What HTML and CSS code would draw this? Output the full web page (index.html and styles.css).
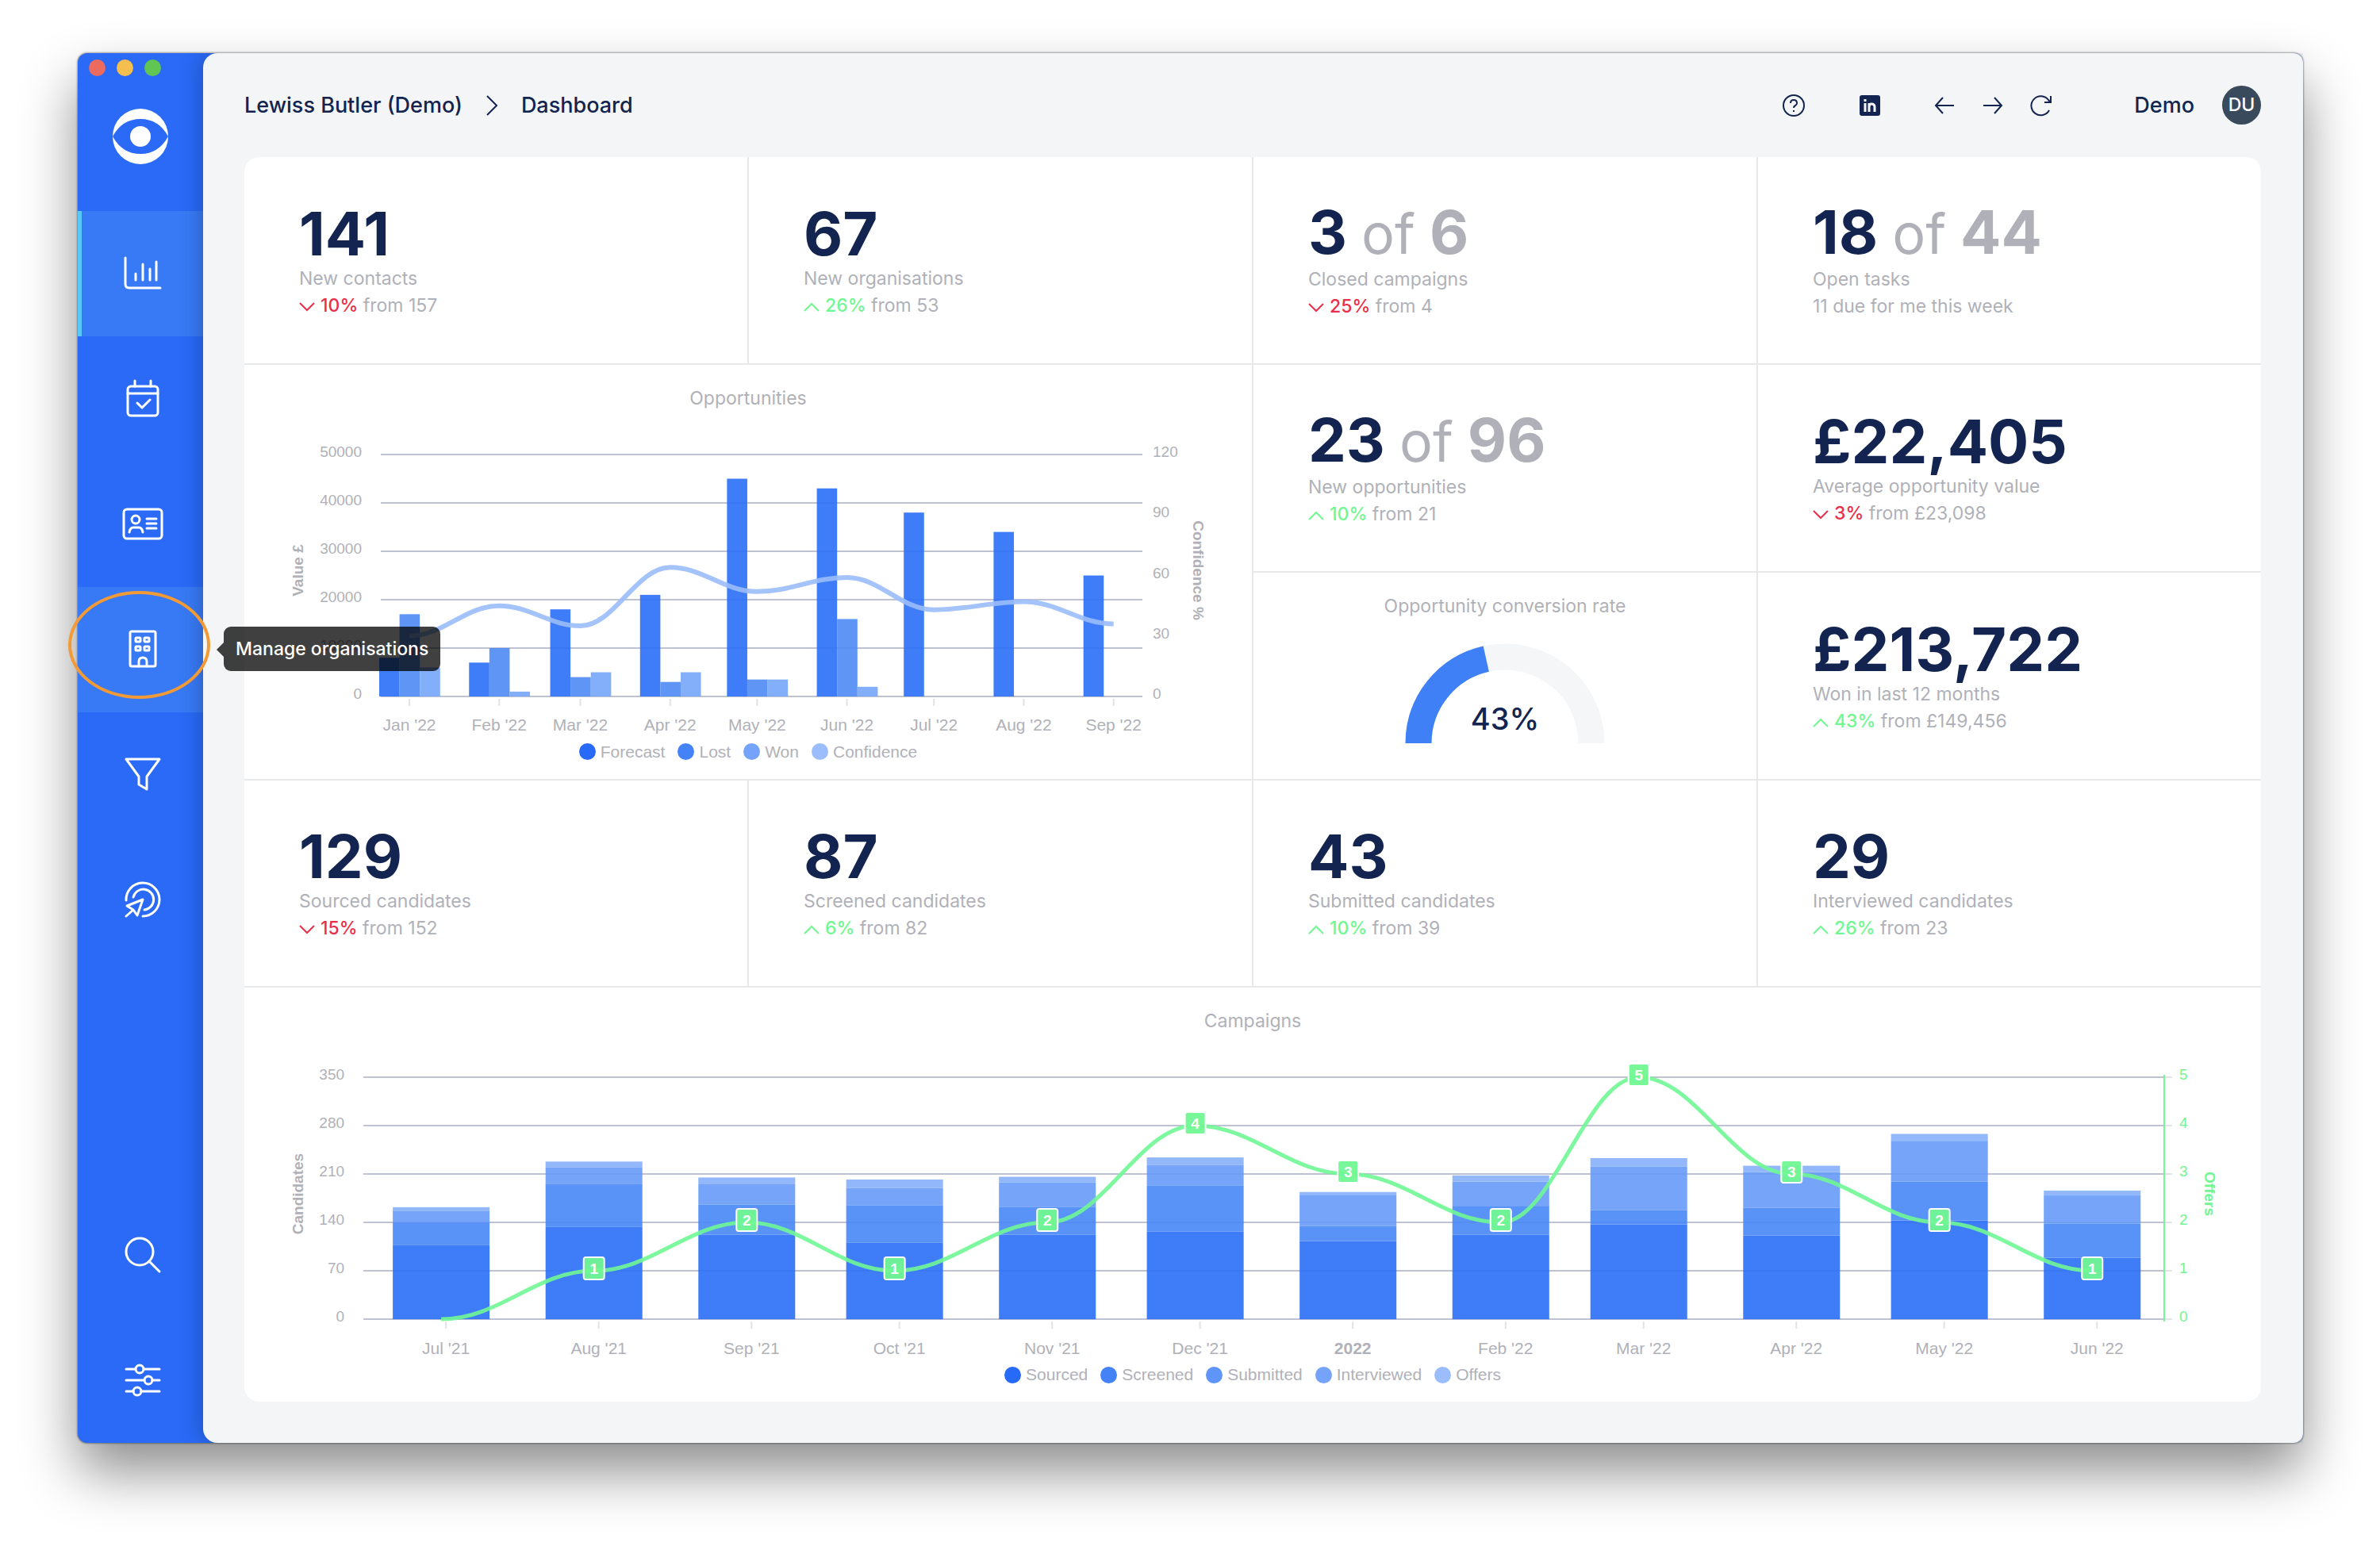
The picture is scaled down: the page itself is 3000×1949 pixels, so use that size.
FILE: index.html
```html
<!DOCTYPE html>
<html lang="en">
<head>
    <meta charset="UTF-8">
    <meta name="viewport" content="width=device-width, initial-scale=1.0">
    <title>Dashboard</title>
    <link rel="stylesheet" href="styles.css">
</head>
<body>

    <div class="window">

        <!-- Sidebar -->
        <aside class="sidebar">
            <div class="sidebar-top">
                <div class="lights">
                    <span class="light light-red"></span>
                    <span class="light light-yellow"></span>
                    <span class="light light-green"></span>
                </div>
                <svg class="logo" viewBox="0 0 70 70">
                    <circle cx="35" cy="35" r="35" fill="#fff"/>
                    <path d="M0 35Q12 13 35 13Q58 13 70 35Q58 57 35 57Q12 57 0 35Z" fill="#2a6af6"/>
                    <circle cx="35" cy="35" r="13" fill="#fff"/>
                </svg>
            </div>
            <nav class="nav">
                <a class="nav-item active" href="#" aria-label="Dashboard">
                    <svg class="icon" viewBox="0 0 52 52"><path d="M4 6V39Q4 44 9 44H48M17 26V34M26 14V34M35 20V34M43 11V34"/></svg>
                </a>
                <a class="nav-item" href="#" aria-label="Tasks">
                    <svg class="icon" viewBox="0 0 52 52"><rect x="7" y="10" width="38" height="37" rx="4"/><path d="M7 19H45M16 3V10M36 3V10M19 31L25 37L35 27"/></svg>
                </a>
                <a class="nav-item" href="#" aria-label="Contacts">
                    <svg class="icon" viewBox="0 0 52 52"><rect x="2" y="7" width="48" height="37" rx="4"/><circle cx="17" cy="20" r="5"/><path d="M9 36Q10 30 14 30H21Q25 30 26 36M31 19H43M31 25H43M31 31H43"/></svg>
                </a>
                <a class="nav-item hover" href="#" aria-label="Organisations">
                    <svg class="icon" viewBox="0 0 52 52"><rect x="10" y="3" width="32" height="44" rx="2"/><rect x="17" y="11" width="6" height="5" rx="1"/><rect x="28" y="11" width="6" height="5" rx="1"/><rect x="17" y="22" width="6" height="5" rx="1"/><rect x="28" y="22" width="6" height="5" rx="1"/><path d="M21 47V41Q21 36 26 36Q31 36 31 41V47"/></svg>
                    <span class="ring"></span>
                    <span class="tooltip">Manage organisations</span>
                </a>
                <a class="nav-item" href="#" aria-label="Opportunities">
                    <svg class="icon" viewBox="0 0 52 52"><path d="M5 6H47L31 28V44L21 38V28Z"/></svg>
                </a>
                <a class="nav-item" href="#" aria-label="Campaigns">
                    <svg class="icon" viewBox="0 0 52 52"><path d="M5 26A21 21 0 1 1 26 46M14 22A13 13 0 1 1 28 38M5 46L14 38M6 33L26 25L19 45L14 38Z"/></svg>
                </a>
            </nav>
            <nav class="nav nav-bottom">
                <a class="nav-item" href="#" aria-label="Search">
                    <svg class="icon" viewBox="0 0 52 52"><circle cx="22" cy="22" r="17"/><path d="M34 34L47 47"/></svg>
                </a>
                <a class="nav-item" href="#" aria-label="Settings">
                    <svg class="icon" viewBox="0 0 52 52"><path d="M5 12H17M27 12H47M5 26H28M38 26H47M5 40H14M24 40H47"/><circle cx="22" cy="12" r="5"/><circle cx="33" cy="26" r="5"/><circle cx="19" cy="40" r="5"/></svg>
                </a>
            </nav>
        </aside>

        <!-- Main area -->
        <main class="main">
            <header class="topbar">
                <div class="breadcrumb">
                    <a href="#">Lewiss Butler (Demo)</a>
                    <svg class="crumb-arrow" viewBox="0 0 16 28"><path d="M2 2L14 14L2 26"/></svg>
                    <a href="#">Dashboard</a>
                </div>
                <div class="tools">
                    <button class="tool tool-help" aria-label="Help">
                        <svg viewBox="0 0 30 30"><circle cx="15" cy="15" r="13"/><path d="M11 12Q11 8 15 8Q19 8 19 12Q19 14 17 15Q15 16 15 18M15 21V23"/></svg>
                    </button>
                    <button class="tool tool-linkedin" aria-label="LinkedIn">
                        <svg viewBox="0 0 30 30"><rect x="3" y="3" width="24" height="24" rx="2" class="solid"/><path class="mark" d="M9 12V23M9 7V10M14 23V12M14 17Q14 13 17 13Q21 13 21 17V23"/></svg>
                    </button>
                    <button class="tool" aria-label="Back">
                        <svg viewBox="0 0 30 30"><path d="M27 15H4M13 5L4 15L13 25"/></svg>
                    </button>
                    <button class="tool" aria-label="Forward">
                        <svg viewBox="0 0 30 30"><path d="M3 15H26M17 5L26 15L17 25"/></svg>
                    </button>
                    <button class="tool tool-reload" aria-label="Reload">
                        <svg viewBox="0 0 30 30"><path d="M25 21A12 12 0 1 1 24 8L27 11M27 3V11H19"/></svg>
                    </button>
                    <span class="user">Demo</span>
                    <span class="avatar">DU</span>
                </div>
            </header>

            <div class="board">
                <section class="card">
                    <p class="value">141</p>
                    <p class="label">New contacts</p>
                    <p class="change"><svg class="arrow down" viewBox="0 0 20 12"><path d="M1 1L10 10L19 1"/></svg><span class="down">10%</span> from 157</p>
                </section>
                <section class="card">
                    <p class="value">67</p>
                    <p class="label">New organisations</p>
                    <p class="change"><svg class="arrow up" viewBox="0 0 20 12"><path d="M1 11L10 2L19 11"/></svg><span class="up">26%</span> from 53</p>
                </section>
                <section class="card">
                    <p class="value">3 <span class="total"><span class="of">of</span> 6</span></p>
                    <p class="label">Closed campaigns</p>
                    <p class="change"><svg class="arrow down" viewBox="0 0 20 12"><path d="M1 1L10 10L19 1"/></svg><span class="down">25%</span> from 4</p>
                </section>
                <section class="card">
                    <p class="value">18 <span class="total"><span class="of">of</span> 44</span></p>
                    <p class="label">Open tasks</p>
                    <p class="change">11 due for me this week</p>
                </section>

                <section class="card chart chart-opportunities">
                    <h2 class="chart-title">Opportunities</h2>
                    <svg class="plot" id="opportunities" viewBox="0 0 1270 390"></svg>
                    <ul class="legend">
                        <li><i class="dot shade-1"></i>Forecast</li>
                        <li><i class="dot shade-2"></i>Lost</li>
                        <li><i class="dot shade-4"></i>Won</li>
                        <li><i class="dot shade-5"></i>Confidence</li>
                    </ul>
                </section>
                <section class="card">
                    <p class="value">23 <span class="total"><span class="of">of</span> 96</span></p>
                    <p class="label">New opportunities</p>
                    <p class="change"><svg class="arrow up" viewBox="0 0 20 12"><path d="M1 11L10 2L19 11"/></svg><span class="up">10%</span> from 21</p>
                </section>
                <section class="card">
                    <p class="value">£22,405</p>
                    <p class="label">Average opportunity value</p>
                    <p class="change"><svg class="arrow down" viewBox="0 0 20 12"><path d="M1 1L10 10L19 1"/></svg><span class="down">3%</span> from £23,098</p>
                </section>
                <section class="card chart">
                    <h2 class="chart-title">Opportunity conversion rate</h2>
                    <svg class="gauge" viewBox="0 0 252 128">
                        <path class="gauge-track" d="M17 126A109 109 0 0 1 235 126"/>
                        <path class="gauge-value" d="M17 126A109 109 0 0 1 235 126" pathLength="100"/>
                        <text class="gauge-text" x="126" y="109">43%</text>
                    </svg>
                </section>
                <section class="card">
                    <p class="value">£213,722</p>
                    <p class="label">Won in last 12 months</p>
                    <p class="change"><svg class="arrow up" viewBox="0 0 20 12"><path d="M1 11L10 2L19 11"/></svg><span class="up">43%</span> from £149,456</p>
                </section>

                <section class="card">
                    <p class="value">129</p>
                    <p class="label">Sourced candidates</p>
                    <p class="change"><svg class="arrow down" viewBox="0 0 20 12"><path d="M1 1L10 10L19 1"/></svg><span class="down">15%</span> from 152</p>
                </section>
                <section class="card">
                    <p class="value">87</p>
                    <p class="label">Screened candidates</p>
                    <p class="change"><svg class="arrow up" viewBox="0 0 20 12"><path d="M1 11L10 2L19 11"/></svg><span class="up">6%</span> from 82</p>
                </section>
                <section class="card">
                    <p class="value">43</p>
                    <p class="label">Submitted candidates</p>
                    <p class="change"><svg class="arrow up" viewBox="0 0 20 12"><path d="M1 11L10 2L19 11"/></svg><span class="up">10%</span> from 39</p>
                </section>
                <section class="card">
                    <p class="value">29</p>
                    <p class="label">Interviewed candidates</p>
                    <p class="change"><svg class="arrow up" viewBox="0 0 20 12"><path d="M1 11L10 2L19 11"/></svg><span class="up">26%</span> from 23</p>
                </section>

                <section class="card chart chart-campaigns">
                    <h2 class="chart-title">Campaigns</h2>
                    <svg class="plot" id="campaigns" viewBox="0 0 2541 390"></svg>
                    <ul class="legend">
                        <li><i class="dot shade-1"></i>Sourced</li>
                        <li><i class="dot shade-2"></i>Screened</li>
                        <li><i class="dot shade-3"></i>Submitted</li>
                        <li><i class="dot shade-4"></i>Interviewed</li>
                        <li><i class="dot shade-5"></i>Offers</li>
                    </ul>
                </section>
            </div>
        </main>
    </div>

    <script src="charts.js"></script>
</body>
</html>
```
FILE: styles.css
```css
* {
    box-sizing: border-box;
}
body {
    margin: 0;
    min-height: 100vh;
    display: flex;
    padding: 67px 97px 130px 98px;
    background-color: #fff;
    font-family: Inter, "Liberation Sans", sans-serif;
    font-size: 23px;
    line-height: 34px;
    color: #12244f;
}
p, h2, ul {
    margin: 0;
    padding: 0;
}
a {
    color: inherit;
    text-decoration: none;
}
.window {
    flex: 1;
    display: flex;
    background-color: #2a6af6;
    border-radius: 12px;
    box-shadow: 0 0 2px 1px rgba(0, 0, 0, 0.35), 0 36px 70px rgba(0, 0, 0, 0.45);
}

/* Sidebar */
.sidebar {
    width: 158px;
    display: flex;
    flex-direction: column;
}
.sidebar-top {
    height: 199px;
}
.lights {
    display: flex;
    gap: 14px;
    padding: 8px 14px;
}
.light {
    width: 21px;
    height: 21px;
    border-radius: 50%;
}
.light-red {
    background-color: #ed6a5e;
}
.light-yellow {
    background-color: #f5bf4f;
}
.light-green {
    background-color: #61c554;
}
.logo {
    display: block;
    width: 70px;
    margin: 33px auto 0;
}
.nav-bottom {
    margin-top: auto;
}
.nav-item {
    position: relative;
    display: flex;
    align-items: center;
    justify-content: center;
    height: 158px;
    border-left: 5px solid transparent;
}
.nav-item.active {
    background-color: #387af5;
    border-left-color: #57c8f8;
}
.nav-item.hover {
    background-color: #387af5;
    border-left-color: #387af5;
}
.icon {
    width: 52px;
    height: 52px;
    fill: none;
    stroke: #fff;
    stroke-width: 3;
    stroke-linecap: round;
    stroke-linejoin: round;
}
.ring {
    position: absolute;
    z-index: 3;
    top: 5px;
    left: -17px;
    width: 179px;
    height: 136px;
    border: 4px solid #f29a35;
    border-radius: 50%;
}
.tooltip {
    position: absolute;
    z-index: 3;
    top: 50px;
    left: 179px;
    padding: 11px 15px;
    background-color: rgba(0, 0, 0, 0.75);
    border-radius: 9px;
    color: #fff;
    font-weight: 500;
    white-space: nowrap;
}
.tooltip::before {
    content: "";
    position: absolute;
    top: 20px;
    left: -9px;
    border: 9px solid transparent;
    border-left: 0;
    border-right-color: rgba(0, 0, 0, 0.75);
}

/* Main area */
.main {
    position: relative;
    z-index: 1;
    flex: 1;
    min-width: 0;
    display: flex;
    flex-direction: column;
    padding: 0 53px 52px 52px;
    background-color: #f3f5f7;
    border-radius: 18px 12px 12px 18px;
    box-shadow: -4px 0 24px rgba(18, 36, 79, 0.3);
    clip-path: inset(0 0 0 -40px);
}
.topbar {
    display: flex;
    align-items: center;
    justify-content: space-between;
    height: 131px;
    font-size: 27px;
    font-weight: 500;
}
.breadcrumb {
    display: flex;
    align-items: center;
    gap: 29px;
}
.crumb-arrow {
    width: 16px;
    height: 28px;
    fill: none;
    stroke: #12244f;
    stroke-width: 2;
}
.tools {
    display: flex;
    align-items: center;
}
.tool {
    width: 30px;
    height: 30px;
    margin-right: 31px;
    padding: 0;
    border: 0;
    background: none;
    cursor: pointer;
}
.tool svg {
    display: block;
    fill: none;
    stroke: #12244f;
    stroke-width: 2;
}
.tool .solid {
    fill: #12244f;
}
.tool .mark {
    stroke: #f3f5f7;
    stroke-width: 3;
}
.tool-help {
    margin-right: 66px;
}
.tool-linkedin {
    margin-right: 64px;
}
.tool-reload {
    margin-right: 102px;
}
.avatar {
    width: 49px;
    height: 49px;
    margin-left: 35px;
    border-radius: 50%;
    background-color: #394a5c;
    color: #fff;
    font-size: 23px;
    line-height: 49px;
    text-align: center;
}

/* Board */
.board {
    flex: 1;
    display: grid;
    grid-template-columns: repeat(4, 1fr);
    grid-template-rows: repeat(6, 1fr);
    gap: 2px;
    background-color: #e7e8ea;
    border-radius: 18px;
    overflow: hidden;
}
.card {
    display: flex;
    flex-direction: column;
    justify-content: center;
    min-width: 0;
    padding: 0 69px;
    background-color: #fff;
    color: #b0b1b8;
}
.value {
    color: #12244f;
    font-size: 76px;
    line-height: 80px;
    font-weight: 700;
}
.total {
    color: #b0b1b8;
}
.of {
    font-size: 70px;
    font-weight: 400;
}
.arrow {
    width: 20px;
    height: 12px;
    margin-right: 7px;
    fill: none;
    stroke: currentColor;
    stroke-width: 2;
}
.up {
    color: #71f792;
    font-weight: 500;
}
.down {
    color: #e8304b;
    font-weight: 500;
}

/* Charts */
.chart {
    justify-content: flex-start;
    align-items: center;
    padding: 25px 0 0;
}
.chart-opportunities {
    grid-column: span 2;
    grid-row: span 2;
}
.chart-campaigns {
    grid-column: span 4;
    grid-row: span 2;
}
.chart-title {
    font-size: 23px;
    font-weight: 400;
}
.plot {
    width: 100%;
    margin-top: 21px;
    font-family: "Liberation Sans", Arial, sans-serif;
    font-size: 19px;
    fill: #b0b1b8;
}
.plot .grid {
    stroke: #bfc2d2;
    stroke-width: 2;
}
.plot .tick {
    stroke: #e2e3e6;
    stroke-width: 2;
}
.plot .month {
    font-size: 21px;
    text-anchor: middle;
}
.plot .left {
    text-anchor: end;
}
.plot .axis-name {
    font-weight: 700;
    text-anchor: middle;
}
.plot .year {
    font-weight: 700;
}
.plot .bar {
    fill-opacity: 0.9;
}
.plot .curve {
    fill: none;
    stroke-width: 6;
    stroke-opacity: 0.9;
}
.plot .curve-blue {
    stroke: #9abcfb;
}
.plot .curve-green {
    stroke: #6ff794;
    stroke-width: 5;
}
.plot .green {
    fill: #71f792;
}
.plot .green-line {
    stroke: #71f792;
    stroke-width: 2;
}
.plot .badge {
    fill: #71f792;
    fill-opacity: 0.95;
    stroke: #fff;
    stroke-width: 2;
}
.plot .badge-text {
    fill: #fff;
    font-weight: 700;
    text-anchor: middle;
}
.legend {
    display: flex;
    gap: 16px;
    margin-top: 2px;
    list-style: none;
    font-family: "Liberation Sans", Arial, sans-serif;
    font-size: 21px;
    line-height: 32px;
}
.legend li {
    display: flex;
    align-items: center;
    gap: 6px;
}
.dot {
    width: 21px;
    height: 21px;
    border-radius: 50%;
}
.shade-1 {
    background-color: #286af8;
}
.shade-2 {
    background-color: #4482f8;
}
.shade-3 {
    background-color: #5f95f9;
}
.shade-4 {
    background-color: #76a3fa;
}
.shade-5 {
    background-color: #9cbdfb;
}
.gauge {
    width: 252px;
    margin-top: 30px;
    fill: none;
}
.gauge-track,
.gauge-value {
    stroke: #f4f6f8;
    stroke-width: 33;
}
.gauge-value {
    stroke: #3f80f7;
    stroke-dasharray: 43 100;
}
.gauge-text {
    fill: #12244f;
    font-size: 38px;
    font-weight: 500;
    text-anchor: middle;
}
```
FILE: charts.js
```js
// Days from the first month to the start of each month
const DAYS = {
    opportunities: [0, 31, 59, 90, 120, 151, 181, 212, 243],
    campaigns: [0, 31, 62, 92, 123, 153, 184, 215, 243, 274, 304, 335]
};

const opportunities = {
    months: ["Jan '22", "Feb '22", "Mar '22", "Apr '22", "May '22", "Jun '22", "Jul '22", "Aug '22", "Sep '22"],
    forecast: [8000, 7000, 18000, 21000, 45000, 43000, 38000, 34000, 25000],
    lost: [17000, 10000, 4000, 3000, 3500, 16000, 0, 0, 0],
    won: [6000, 1000, 5000, 5000, 3500, 2000, 0, 0, 0],
    confidence: [30, 45, 35, 64, 52, 59, 43, 47, 36]
};

const campaigns = {
    months: ["Jul '21", "Aug '21", "Sep '21", "Oct '21", "Nov '21", "Dec '21", "2022", "Feb '22", "Mar '22", "Apr '22", "May '22", "Jun '22"],
    sourced: [107, 134, 122, 111, 122, 127, 113, 122, 137, 121, 143, 89],
    screened: [33, 62, 44, 54, 40, 66, 22, 42, 21, 40, 56, 49],
    submitted: [17, 24, 30, 25, 36, 30, 45, 35, 63, 52, 59, 41],
    interviewed: [5, 8, 9, 12, 8, 11, 4, 9, 12, 9, 10, 7],
    offers: [0, 1, 2, 1, 2, 4, 3, 2, 5, 3, 2, 1]
};

const TOP = 33;
const BOTTOM = 338;

function y(value, max) {
    return BOTTOM - value / max * (BOTTOM - TOP);
}

function line(x1, y1, x2, y2, cls) {
    return `<line x1="${x1}" y1="${y1}" x2="${x2}" y2="${y2}" class="${cls}"/>`;
}

function text(x, y, str, cls) {
    return `<text x="${x}" y="${y}" class="${cls}">${str}</text>`;
}

function bar(x, top, width, height, fill) {
    return `<rect x="${x}" y="${top}" width="${width}" height="${height}" fill="${fill}" class="bar"/>`;
}

// Axis name turned along the side of the plot
function axisName(x, y, angle, str, cls) {
    return `<text transform="translate(${x} ${y}) rotate(${angle})" class="axis-name ${cls}">${str}</text>`;
}

// Smooth curve that is flat at every point
function curve(points, cls) {
    let d = `M${points[0][0]} ${points[0][1]}`;
    for (let i = 1; i < points.length; i++) {
        const [px, py] = points[i - 1];
        const [cx, cy] = points[i];
        const k = (cx - px) * 0.38;
        d += `C${px + k} ${py} ${cx - k} ${cy} ${cx} ${cy}`;
    }
    return `<path d="${d}" class="curve ${cls}"/>`;
}

function gridLines(x1, x2) {
    let out = '';
    for (let i = 0; i <= 5; i++) {
        out += line(x1, y(i, 5), x2, y(i, 5), 'grid');
    }
    return out;
}

function drawOpportunities() {
    const xs = DAYS.opportunities.map(d => 208 + d * 3.653);
    let out = gridLines(172, 1132);

    for (let v = 0; v <= 50000; v += 10000) {
        out += text(148, y(v, 50000) + 3, v, 'left');
    }
    for (let v = 0; v <= 120; v += 30) {
        out += text(1145, y(v, 120) + 3, v, '');
    }
    out += axisName(74, 179, -90, 'Value £', '');
    out += axisName(1196, 179, 90, 'Confidence %', '');

    xs.forEach((x, i) => {
        const sets = [[opportunities.forecast, '#2a6ff7'], [opportunities.lost, '#4e8bf5'], [opportunities.won, '#76a5f8']];
        sets.forEach(([values, fill], n) => {
            const top = y(values[i], 50000);
            out += bar(x - 38 + n * 25.6, top, 25.6, BOTTOM - top, fill);
        });
        out += line(x, 341, x, 350, 'tick');
        out += text(x, 381, opportunities.months[i], 'month');
    });
    out += curve(xs.map((x, i) => [x, y(opportunities.confidence[i], 120)]), 'curve-blue');

    document.getElementById('opportunities').innerHTML = out;
}

function drawCampaigns() {
    const xs = DAYS.campaigns.map(d => 248 + d * 6.21);
    let out = gridLines(150, 2419);

    for (let i = 0; i <= 5; i++) {
        out += text(126, y(i, 5) + 3, i * 70, 'left');
        out += line(2419, y(i, 5), 2429, y(i, 5), 'tick');
        out += text(2438, y(i, 5) + 3, i, 'green');
    }
    out += line(2419, 30, 2419, 341, 'green-line');
    out += axisName(74, 180, -90, 'Candidates', '');
    out += axisName(2470, 180, 90, 'Offers', 'green');

    xs.forEach((x, i) => {
        const sets = [[campaigns.sourced, '#2a6ff7'], [campaigns.screened, '#4787f7'],
                      [campaigns.submitted, '#669af8'], [campaigns.interviewed, '#86aff9']];
        let sum = 0;
        sets.forEach(([values, fill]) => {
            const base = y(sum, 350);
            sum += values[i];
            out += bar(x - 61, y(sum, 350), 122, base - y(sum, 350), fill);
        });
        const month = campaigns.months[i];
        out += line(x + 6, 341, x + 6, 350, 'tick');
        out += text(x + 6, 382, month, month === '2022' ? 'month year' : 'month');
    });

    out += curve(xs.map((x, i) => [x, y(campaigns.offers[i], 5)]), 'curve-green');
    xs.forEach((x, i) => {
        const n = campaigns.offers[i];
        if (n > 0) {
            out += `<rect x="${x - 13}" y="${y(n, 5) - 17}" width="26" height="28" rx="3" class="badge"/>`;
            out += text(x, y(n, 5) + 4, n, 'badge-text');
        }
    });

    document.getElementById('campaigns').innerHTML = out;
}

drawOpportunities();
drawCampaigns();
```
